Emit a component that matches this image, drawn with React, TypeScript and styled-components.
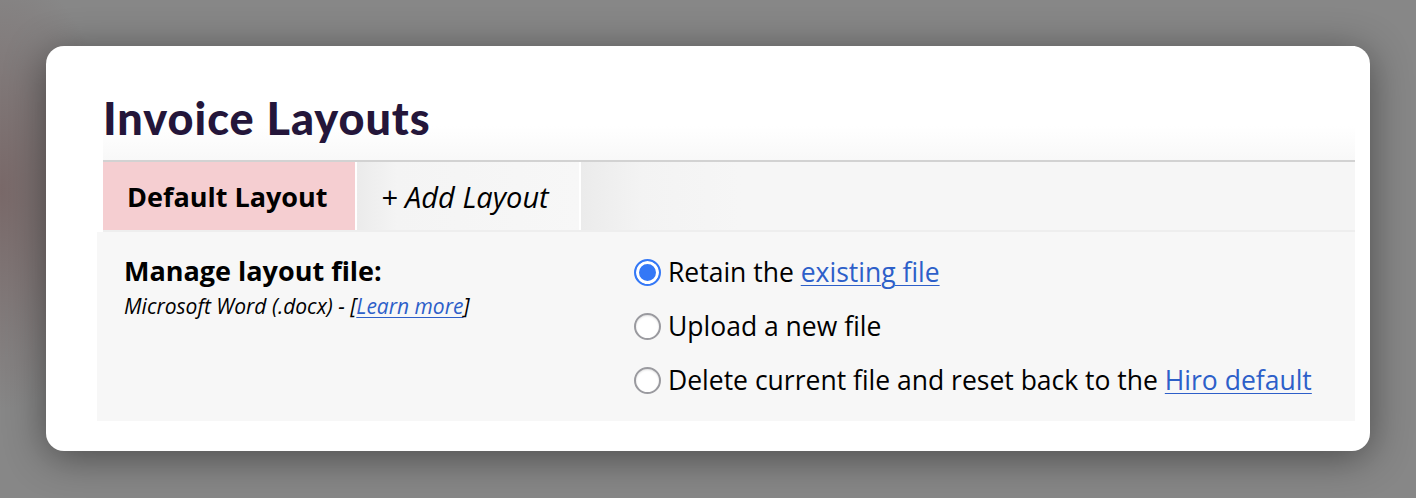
import React, { useState } from 'react';
import { createGlobalStyle, styled } from 'styled-components';

const GlobalStyle = createGlobalStyle`
  html, body {
    margin: 0;
    padding: 0;
  }
  body {
    font-family: "Open Sans", "Noto Sans", sans-serif;
    background: #878787;
  }
`;

const Backdrop = styled.div`
  width: 1416px;
  height: 498px;
  box-sizing: border-box;
  padding: 46px 46px 47px 46px;
  background:
    radial-gradient(ellipse 120px 220px at 0px 190px, rgba(110, 80, 80, 0.55), transparent),
    #878787;
  overflow: hidden;
`;

const Card = styled.div`
  height: 405px;
  box-sizing: border-box;
  background: #fff;
  border-radius: 18px;
  box-shadow: 0 6px 40px rgba(0, 0, 0, 0.45);
  padding: 0 15px 30px 51px;
  display: flex;
  flex-direction: column;
`;

const Header = styled.div`
  margin-left: 6px;
  padding-top: 48px;
  height: 66px;
  background: linear-gradient(to bottom, #fff 70%, #f8f8f8 100%);
`;

const Title = styled.h1`
  margin: 0;
  font-family: Lato, "Noto Sans", sans-serif;
  font-weight: 900;
  font-size: 45px;
  line-height: 48px;
  letter-spacing: 1px;
  color: #24163a;
`;

const TabBar = styled.div`
  margin-left: 6px;
  display: flex;
  border-top: 2px solid #d2d2d2;
  border-bottom: 2px solid #eeeeee;
  background: #f6f6f6;
  height: 68px;
`;

const Tab = styled.div<{ $active?: boolean }>`
  display: flex;
  align-items: center;
  box-sizing: border-box;
  height: 100%;
  color: #000;
  border-right: 2px solid #fff;
  font-size: ${(p) => (p.$active ? '27px' : '29px')};
  font-weight: ${(p) => (p.$active ? 700 : 400)};
  font-style: ${(p) => (p.$active ? 'normal' : 'italic')};
  background: ${(p) =>
    p.$active ? '#f5ced1' : 'linear-gradient(to right, #ebebeb 0px, #f4f4f4 40px, #f7f7f7 100%)'};
  width: ${(p) => (p.$active ? '254px' : '224px')};
  padding-left: ${(p) => (p.$active ? '24px' : '24px')};
`;

const TabFiller = styled.div`
  flex: 1;
  background: linear-gradient(to right, #ebebeb 0px, #f3f3f3 60px, #f6f6f6 160px, #f6f6f6 100%);
`;

const Panel = styled.div`
  flex: 1;
  background: #f7f7f7;
  display: grid;
  grid-template-columns: 510px 1fr;
  padding: 22px 0 0 27px;
`;

const Label = styled.div`
  font-size: 27px;
  font-weight: 700;
  line-height: 34px;
  color: #000;
`;

const Hint = styled.div`
  font-size: 21px;
  font-style: italic;
  line-height: 28px;
  color: #000;
  margin-top: 4px;
`;

const Link = styled.a`
  color: #2d5fc9;
  text-decoration: underline;
  text-decoration-thickness: 1px;
  text-underline-offset: 3px;
  cursor: pointer;
`;

const Options = styled.div`
  display: flex;
  flex-direction: column;
  gap: 18px;
`;

const Option = styled.label`
  display: flex;
  align-items: center;
  gap: 7px;
  font-size: 26.5px;
  line-height: 36px;
  color: #000;
  cursor: pointer;
`;

const Radio = styled.span<{ $checked?: boolean }>`
  width: 27px;
  height: 27px;
  box-sizing: border-box;
  border-radius: 50%;
  flex-shrink: 0;
  background: #fff;
  border: ${(p) => (p.$checked ? '2px solid #3478f6' : '2px solid #9a9a9f')};
  box-shadow: ${(p) => (p.$checked ? 'inset 0 0 0 3px #fff' : 'inset 0 1px 2px rgba(0,0,0,0.12)')};
  ${(p) => (p.$checked ? 'background: #3478f6;' : '')}
`;

const options = [
  { id: 'retain', text: 'Retain the ', link: 'existing file' },
  { id: 'upload', text: 'Upload a new file', link: '' },
  { id: 'reset', text: 'Delete current file and reset back to the ', link: 'Hiro default' },
];

export default function App() {
  const [choice, setChoice] = useState('retain');

  return (
    <>
      <GlobalStyle />
      <Backdrop>
        <Card>
          <Header>
            <Title>Invoice Layouts</Title>
          </Header>
          <TabBar>
            <Tab $active>Default Layout</Tab>
            <Tab>+ Add Layout</Tab>
            <TabFiller />
          </TabBar>
          <Panel>
            <div>
              <Label>Manage layout file:</Label>
              <Hint>
                Microsoft Word (.docx) - [<Link>Learn more</Link>]
              </Hint>
            </div>
            <Options>
              {options.map((o) => (
                <Option key={o.id} onClick={() => setChoice(o.id)}>
                  <Radio $checked={choice === o.id} />
                  <span>
                    {o.text}
                    {o.link ? <Link>{o.link}</Link> : null}
                  </span>
                </Option>
              ))}
            </Options>
          </Panel>
        </Card>
      </Backdrop>
    </>
  );
}
